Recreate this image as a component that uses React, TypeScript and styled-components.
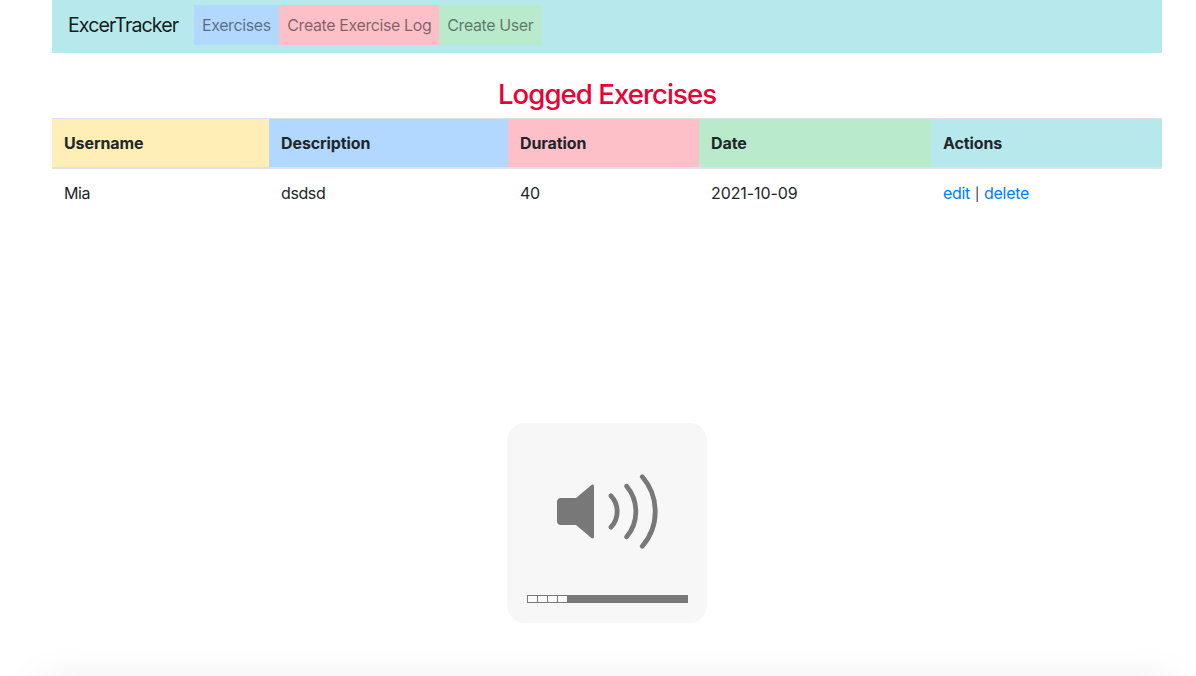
import React from "react";
import styled, { createGlobalStyle } from "styled-components";

const GlobalStyle = createGlobalStyle`
  *, *::before, *::after { box-sizing: border-box; }
  body {
    margin: 0;
    background: #fff;
    color: #212529;
    font: 400 16px/24px Inter, "Liberation Sans", sans-serif;
    overflow: hidden;
  }
`;

const palette = {
  yellow: "#ffeeb6",
  blue: "#b2d8ff",
  pink: "#fdc0c9",
  green: "#b9eacc",
  teal: "#b6e8ec",
};
type Tone = keyof typeof palette;

const Page = styled.div`
  position: relative;
  height: 676px;
  padding: 0 34px 0 52px;
  overflow: hidden;
`;

const Navbar = styled.nav`
  display: flex;
  align-items: center;
  height: 53px;
  padding: 0 16px 3px;
  background: ${palette.teal};
`;

const Brand = styled.a`
  width: 126px;
  font-size: 19.6px;
  line-height: 30px;
  letter-spacing: -0.92px;
  white-space: nowrap;
  color: rgba(0, 0, 0, 0.9);
`;

const NavLink = styled.a<{ $tone: Tone; $width: number }>`
  width: ${(p) => p.$width}px;
  padding: 8px;
  white-space: nowrap;
  letter-spacing: -0.4px;
  color: rgba(0, 0, 0, 0.5);
  background: ${(p) => palette[p.$tone]};
`;

const Title = styled.h3`
  margin: 24px 0 7px;
  font-size: 27.6px;
  font-weight: 500;
  line-height: 34px;
  letter-spacing: -0.97px;
  text-align: center;
  color: #eb0037;
`;

const Table = styled.table`
  width: 100%;
  table-layout: fixed;
  border-collapse: separate;
  border-spacing: 0;
`;

const HeadCell = styled.th<{ $tone: Tone; $width: number }>`
  width: ${(p) => p.$width}px;
  height: 51px;
  padding: 0 12px;
  border-top: 1px solid #dee2e6;
  border-bottom: 2px solid #dee2e6;
  text-align: left;
  font-weight: 700;
  letter-spacing: -0.1px;
  background: ${(p) => palette[p.$tone]};
  background-clip: padding-box;
`;

const Cell = styled.td<{ $tracking?: number }>`
  padding: 12px;
  letter-spacing: ${(p) => p.$tracking ?? -0.4}px;
`;

const Action = styled.a`
  color: #007bff;
`;

const Divider = styled.span`
  margin: 0 0.8px;
  font-size: 13px;
  line-height: 1;
  vertical-align: 0.5px;
`;

const VolumePanel = styled.div`
  position: absolute;
  left: 507px;
  top: 423px;
  display: flex;
  flex-direction: column;
  align-items: flex-start;
  justify-content: space-between;
  width: 200px;
  height: 200px;
  padding: 50px 19px 20px 20px;
  border-radius: 18px;
  background: #f7f7f7;
`;

const Speaker = styled.svg`
  display: block;
  width: 104px;
  height: 78px;
  margin-left: 28px;
`;

const Level = styled.div`
  display: flex;
  gap: 1px;
  width: 161px;
  height: 8px;
  padding: 1px;
  background: #787878;
`;

const Segment = styled.span`
  width: 9px;
  height: 6px;
  background: #fafafa;
`;

const BottomShade = styled.div`
  position: absolute;
  left: 42px;
  top: 686px;
  width: 1130px;
  height: 60px;
  box-shadow: 0 0 46px rgba(0, 0, 0, 0.1);
`;

const links: { label: string; tone: Tone; width: number }[] = [
  { label: "Exercises", tone: "blue", width: 85.3 },
  { label: "Create Exercise Log", tone: "pink", width: 160 },
  { label: "Create User", tone: "green", width: 102.7 },
];

const columns: { label: string; tone: Tone; width: number }[] = [
  { label: "Username", tone: "yellow", width: 217 },
  { label: "Description", tone: "blue", width: 239 },
  { label: "Duration", tone: "pink", width: 191 },
  { label: "Date", tone: "green", width: 232 },
  { label: "Actions", tone: "teal", width: 231 },
];

export default function App() {
  return (
    <Page>
      <GlobalStyle />
      <Navbar>
        <Brand>ExcerTracker</Brand>
        {links.map((l) => (
          <NavLink key={l.label} $tone={l.tone} $width={l.width}>
            {l.label}
          </NavLink>
        ))}
      </Navbar>
      <Title>Logged Exercises</Title>
      <Table>
        <thead>
          <tr>
            {columns.map((c) => (
              <HeadCell key={c.label} $tone={c.tone} $width={c.width}>
                {c.label}
              </HeadCell>
            ))}
          </tr>
        </thead>
        <tbody>
          <tr>
            <Cell>Mia</Cell>
            <Cell>dsdsd</Cell>
            <Cell>40</Cell>
            <Cell $tracking={-0.1}>2021-10-09</Cell>
            <Cell $tracking={-0.3}>
              <Action>edit</Action> <Divider>|</Divider> <Action>delete</Action>
            </Cell>
          </tr>
        </tbody>
      </Table>
      <VolumePanel>
        <Speaker viewBox="555 473 104 78">
          <path
            d="M561 498H576L591.4 484.9Q594 483.6 594 486.2V536.8Q594 539.4 591.4 538.1L576 525H561Q557 525 557 521V502Q557 498 561 498Z"
            fill="#787878"
          />
          <g fill="none" stroke="#787878" strokeWidth="4.8" strokeLinecap="round">
            <path d="M611 495.8A23 23 0 0 1 611 527.2" />
            <path d="M626.7 486.2A39.5 39.5 0 0 1 626.7 536.8" />
            <path d="M642.3 476.8A53 53 0 0 1 642.3 546.2" />
          </g>
        </Speaker>
        <Level>
          <Segment />
          <Segment />
          <Segment />
          <Segment />
        </Level>
      </VolumePanel>
      <BottomShade />
    </Page>
  );
}
